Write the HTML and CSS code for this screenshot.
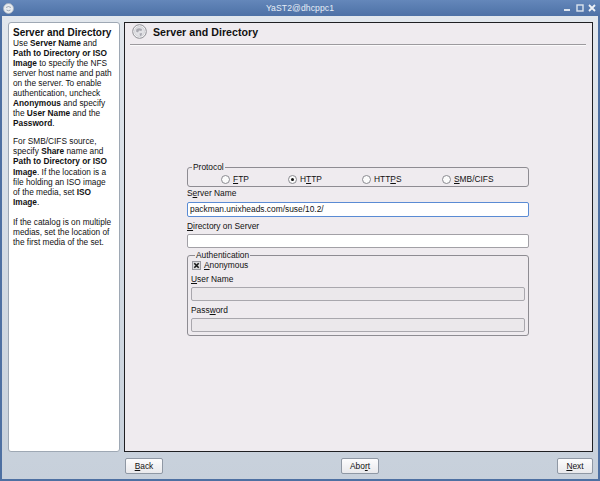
FILE: index.html
```html
<!DOCTYPE html>
<html>
<head>
<meta charset="utf-8">
<link rel="stylesheet" href="styles.css">
</head>
<body>
<div class="window">
  <div class="titlebar">
    <div class="tb-left">
      <svg class="app-icon" width="11" height="11" viewBox="0 0 11 11"><circle cx="5.5" cy="5.5" r="5" fill="#e8ecf0" stroke="#aab4c0" stroke-width="0.8"/><path d="M3 4.5 Q5.5 2.5 8 4.5 M3.5 7 Q5.5 8.5 7.5 7" stroke="#8a96a4" stroke-width="0.8" fill="none"/></svg>
    </div>
    <div class="tb-title">YaST2@dhcppc1</div>
    <div class="tb-controls">
      <svg width="36" height="10" viewBox="0 0 36 10">
        <rect x="2" y="6" width="6" height="2" fill="#dce4ee"/>
        <rect x="15" y="2" width="6" height="6" fill="none" stroke="#dce4ee" stroke-width="1.4"/>
        <path d="M27 2 L33 8 M33 2 L27 8" stroke="#eef2f7" stroke-width="1.8"/>
      </svg>
    </div>
  </div>
  <div class="frame">
    <aside class="help">
      <div class="help-title">Server and Directory</div>
      <p>Use <b>Server Name</b> and<br><b>Path to Directory or ISO</b><br><b>Image</b> to specify the NFS<br>server host name and path<br>on the server. To enable<br>authentication, uncheck<br><b>Anonymous</b> and specify<br>the <b>User Name</b> and the<br><b>Password</b>.</p>
      <p class="mid">For SMB/CIFS source,<br>specify <b>Share</b> name and<br><b>Path to Directory or ISO</b><br><b>Image</b>. If the location is a<br>file holding an ISO image<br>of the media, set <b>ISO</b><br><b>Image</b>.</p>
      <p>If the catalog is on multiple<br>medias, set the location of<br>the first media of the set.</p>
    </aside>
    <main class="main">
      <div class="main-head">
        <svg class="head-icon" width="15" height="15" viewBox="0 0 15 15"><circle cx="7.5" cy="7.5" r="6.8" fill="#f2f2f4" stroke="#8e8e94" stroke-width="1"/><circle cx="7.5" cy="7.5" r="5" fill="#e2e2e6" stroke="#c2c2c8" stroke-width="0.6"/><path d="M4.5 5 Q7 3.5 10 5 L9.5 7 L7 6.5 L6 8.5 L4 7.5 Z" fill="#a8a8b0"/><path d="M7.5 9.5 L10 9 L9.5 11.5 L8 12 Z" fill="#a8a8b0"/></svg>
        <span class="head-text">Server and Directory</span>
      </div>
      <div class="rule"></div>
      <form class="form">
        <fieldset class="group proto">
          <legend>Protocol</legend>
          <div class="radios">
            <label class="radio"><span class="rb"></span><span><u>F</u>TP</span></label>
            <label class="radio"><span class="rb on"></span><span>H<u>T</u>TP</span></label>
            <label class="radio"><span class="rb"></span><span>HTT<u>P</u>S</span></label>
            <label class="radio"><span class="rb"></span><span><u>S</u>MB/CIFS</span></label>
          </div>
        </fieldset>
        <div class="lbl first">S<u>e</u>rver Name</div>
        <div class="input focus">packman.unixheads.com/suse/10.2/</div>
        <div class="lbl second"><u>D</u>irectory on Server</div>
        <div class="input"></div>
        <fieldset class="group auth">
          <legend>Authentication</legend>
          <div class="check"><svg width="9" height="9" viewBox="0 0 9 9"><rect x="0.5" y="0.5" width="8" height="8" fill="#dcdcde" stroke="#9a9aa0"/><path d="M2.3 2.3 L6.7 6.7 M6.7 2.3 L2.3 6.7" stroke="#1a1a1a" stroke-width="1.6"/></svg><span><u>A</u>nonymous</span></div>
          <div class="lbl sub"><u>U</u>ser Name</div>
          <div class="input dis"></div>
          <div class="lbl sub">Pass<u>w</u>ord</div>
          <div class="input dis"></div>
        </fieldset>
      </form>
    </main>
    <div class="footer">
      <button class="btn" type="button"><u>B</u>ack</button>
      <button class="btn" type="button">Abo<u>r</u>t</button>
      <button class="btn next" type="button"><u>N</u>ext</button>
    </div>
  </div>
</div>
</body>
</html>
```

FILE: styles.css
```css
html, body {
  margin: 0;
  padding: 0;
}
body {
  font-family: "Liberation Sans", Arial, sans-serif;
  font-size: 8.4px;
  color: #111;
  width: 600px;
  height: 481px;
  overflow: hidden;
}
.window {
  width: 600px;
  height: 481px;
  display: flex;
  flex-direction: column;
}
.titlebar {
  height: 16px;
  flex: none;
  background: linear-gradient(#6487ba, #4d71a6);
  display: grid;
  grid-template-columns: 60px 1fr 60px;
  align-items: center;
  color: #e6edf6;
}
.tb-left {
  display: flex;
  align-items: center;
  padding-left: 3px;
}
.app-icon { display: block; }
.tb-title {
  text-align: center;
  font-size: 8.6px;
  line-height: 16px;
  letter-spacing: 0.1px;
}
.tb-controls {
  display: flex;
  justify-content: flex-end;
  padding-right: 2px;
}
.tb-controls svg { display: block; }
.frame {
  flex: 1;
  border: 2px solid #4e70a2;
  border-top: 0;
  background: linear-gradient(#e2e7ed, #c7d0db);
  display: grid;
  grid-template-columns: 112px 1fr;
  grid-template-rows: 430px 16px;
  column-gap: 4px;
  row-gap: 6px;
  padding: 6px 5px 5px 6px;
}
.help {
  background: #fff;
  border: 1px solid #9ea8b4;
  border-radius: 3px;
  padding: 3px 3px 0 4px;
  line-height: 10px;
  font-size: 8.3px;
  overflow: hidden;
}
.help-title {
  font-weight: bold;
  font-size: 10px;
  line-height: 10px;
  margin-top: 2px;
}
.help p {
  margin: 0 0 8px 0;
}
.help p.mid {
  line-height: 10.2px;
  margin-bottom: 10px;
}
.help b { font-weight: bold; }
.main {
  background: #efebef;
  border: 1px solid #1f1f22;
  padding: 0 6px 0 5px;
  display: flex;
  flex-direction: column;
}
.main-head {
  display: flex;
  align-items: center;
  gap: 6px;
  margin: 1px 0 0 2px;
  height: 15px;
}
.head-icon { display: block; flex: none; }
.head-text {
  font-size: 10.6px;
  font-weight: bold;
  color: #111;
  letter-spacing: 0.05px;
}
.rule {
  margin-top: 5px;
  height: 0;
  border-top: 1px solid #9c9a9e;
  border-bottom: 1px solid #fbfafb;
}
.form {
  width: 342px;
  margin: 116px auto 0;
}
.group {
  margin: 0;
  padding: 0;
  border: 1px solid #8e8c92;
  border-radius: 3px;
  min-width: 0;
}
.group legend {
  padding: 0 1px;
  margin-left: 4px;
  line-height: 10px;
  font-size: 8.4px;
}
.radios {
  display: grid;
  grid-template-columns: 67px 74px 80px 1fr;
  padding-left: 33px;
  height: 14px;
  align-items: center;
}
.radio {
  display: flex;
  align-items: center;
  gap: 3px;
}
.rb {
  width: 9px;
  height: 9px;
  box-sizing: border-box;
  border: 1px solid #8a8a90;
  border-radius: 50%;
  background: #fbfbfb;
  display: flex;
  align-items: center;
  justify-content: center;
  flex: none;
}
.rb.on::after {
  content: "";
  width: 3px;
  height: 3px;
  border-radius: 50%;
  background: #111;
}
.lbl {
  line-height: 10px;
  height: 10px;
  margin: 6px 0 3px 0;
}
.lbl.first { margin-top: 1px; margin-bottom: 4px; }
.lbl.second { margin-top: 4px; }
.input {
  height: 14px;
  box-sizing: border-box;
  border: 1px solid #a2a0a6;
  border-radius: 2px;
  background: #fff;
  line-height: 12px;
  padding-left: 2px;
  font-size: 8.4px;
  white-space: nowrap;
}
.input.focus {
  border-color: #5a8bd4;
  height: 15px;
  line-height: 13px;
}
.input.dis {
  background: #ebe8eb;
  border-color: #a9a7ad;
}
.auth {
  margin-top: 2px;
  padding: 0 3px 3px 3px;
}
.check {
  display: flex;
  align-items: center;
  gap: 3px;
  height: 10px;
  margin-left: 1px;
}
.check svg { display: block; }
.lbl.sub {
  margin: 4px 0 3px 0;
}
.footer {
  grid-column: 2;
  display: flex;
  justify-content: space-between;
  align-items: stretch;
  padding-left: 1px;
}
.btn {
  width: 38px;
  height: 16px;
  padding: 0;
  margin: 0;
  border: 1px solid #8f98a4;
  border-radius: 2px;
  background: linear-gradient(#fcfcfd, #e9e9ec);
  font-family: "Liberation Sans", Arial, sans-serif;
  font-size: 8.4px;
  color: #111;
  line-height: 14px;
}
.btn.next { width: 36px; }
u { text-decoration-thickness: 1px; text-underline-offset: 1px; }
```
